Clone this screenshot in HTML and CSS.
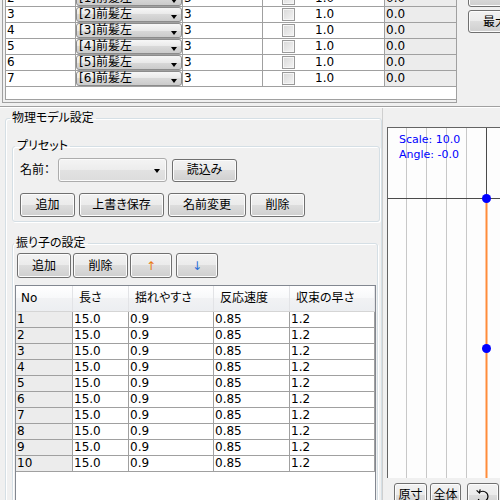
FILE: index.html
```html
<!DOCTYPE html>
<html lang="ja">
<head>
  <meta charset="UTF-8">
  <meta name="viewport" content="width=device-width, initial-scale=1.0">
  <title>物理モデル設定</title>
  <link rel="stylesheet" href="styles.css">
</head>
<body>
  <div class="top">
    <div class="grid">
      <div class="view">
        <div class="rows">
          <div class="row"><span class="c-no">2</span><span class="c-sel"><span class="combo">[1]前髪左<i class="arrow"></i></span></span><span class="c-val">3</span><span class="c-chk"><span class="box"></span></span><span class="c-w">1.0</span><span class="c-off">0.0</span></div>
          <div class="row"><span class="c-no">3</span><span class="c-sel"><span class="combo">[2]前髪左<i class="arrow"></i></span></span><span class="c-val">3</span><span class="c-chk"><span class="box"></span></span><span class="c-w">1.0</span><span class="c-off">0.0</span></div>
          <div class="row"><span class="c-no">4</span><span class="c-sel"><span class="combo">[3]前髪左<i class="arrow"></i></span></span><span class="c-val">3</span><span class="c-chk"><span class="box"></span></span><span class="c-w">1.0</span><span class="c-off">0.0</span></div>
          <div class="row"><span class="c-no">5</span><span class="c-sel"><span class="combo">[4]前髪左<i class="arrow"></i></span></span><span class="c-val">3</span><span class="c-chk"><span class="box"></span></span><span class="c-w">1.0</span><span class="c-off">0.0</span></div>
          <div class="row"><span class="c-no">6</span><span class="c-sel"><span class="combo">[5]前髪左<i class="arrow"></i></span></span><span class="c-val">3</span><span class="c-chk"><span class="box"></span></span><span class="c-w">1.0</span><span class="c-off">0.0</span></div>
          <div class="row"><span class="c-no">7</span><span class="c-sel"><span class="combo">[6]前髪左<i class="arrow"></i></span></span><span class="c-val">3</span><span class="c-chk"><span class="box"></span></span><span class="c-w">1.0</span><span class="c-off">0.0</span></div>
        </div>
      </div>
    </div>
    <div class="side">
      <button class="btn side-btn cut"></button>
      <button class="btn side-btn">最大化</button>
    </div>
  </div>
  <div class="hsplit"></div>

  <div class="bottom">
    <div class="left">
      <fieldset class="group outer">
        <legend>物理モデル設定</legend>

        <fieldset class="group preset">
          <legend>プリセット</legend>
          <div class="line">
            <label class="name-label">名前：</label>
            <span class="select"><i class="arrow"></i></span>
            <button class="btn load">読込み</button>
          </div>
          <div class="line btn-row">
            <button class="btn w55">追加</button>
            <button class="btn w85">上書き保存</button>
            <button class="btn w78">名前変更</button>
            <button class="btn w55">削除</button>
          </div>
        </fieldset>

        <fieldset class="group pendulum">
          <legend>振り子の設定</legend>
          <div class="line tools">
            <button class="btn w54">追加</button>
            <button class="btn w55">削除</button>
            <button class="btn w42 up">↑</button>
            <button class="btn w42 down">↓</button>
          </div>
          <div class="table">
            <div class="thead"><span>No</span><span>長さ</span><span>揺れやすさ</span><span>反応速度</span><span>収束の早さ</span></div>
            <div class="trow"><span>1</span><span>15.0</span><span>0.9</span><span>0.85</span><span>1.2</span></div>
            <div class="trow"><span>2</span><span>15.0</span><span>0.9</span><span>0.85</span><span>1.2</span></div>
            <div class="trow"><span>3</span><span>15.0</span><span>0.9</span><span>0.85</span><span>1.2</span></div>
            <div class="trow"><span>4</span><span>15.0</span><span>0.9</span><span>0.85</span><span>1.2</span></div>
            <div class="trow"><span>5</span><span>15.0</span><span>0.9</span><span>0.85</span><span>1.2</span></div>
            <div class="trow"><span>6</span><span>15.0</span><span>0.9</span><span>0.85</span><span>1.2</span></div>
            <div class="trow"><span>7</span><span>15.0</span><span>0.9</span><span>0.85</span><span>1.2</span></div>
            <div class="trow"><span>8</span><span>15.0</span><span>0.9</span><span>0.85</span><span>1.2</span></div>
            <div class="trow"><span>9</span><span>15.0</span><span>0.9</span><span>0.85</span><span>1.2</span></div>
            <div class="trow"><span>10</span><span>15.0</span><span>0.9</span><span>0.85</span><span>1.2</span></div>
          </div>
        </fieldset>
      </fieldset>
    </div>

    <div class="vsplit"></div>

    <div class="right">
      <div class="canvas">
        <svg width="112" height="350" viewBox="0 0 112 350">
          <g stroke="#c8c8c8" stroke-width="1">
            <line x1="18.5" y1="0" x2="18.5" y2="350"/>
            <line x1="38.5" y1="0" x2="38.5" y2="350"/>
            <line x1="58.5" y1="0" x2="58.5" y2="350"/>
            <line x1="78.5" y1="0" x2="78.5" y2="350"/>
          </g>
          <line x1="0" y1="70.5" x2="112" y2="70.5" stroke="#4a4a4a"/>
          <line x1="98.5" y1="0" x2="98.5" y2="70" stroke="#4a4a4a"/>
          <line x1="98.5" y1="70" x2="98.5" y2="350" stroke="#ff8c3a" stroke-width="2"/>
          <circle cx="98.5" cy="70.5" r="4.5" fill="#0000ff"/>
          <circle cx="98.5" cy="220.5" r="4.5" fill="#0000ff"/>
          <text class="info" x="11" y="15">Scale: 10.0</text>
          <text class="info" x="11" y="30">Angle: -0.0</text>
        </svg>
      </div>
      <div class="toolbar">
        <button class="btn tb w33">原寸</button>
        <button class="btn tb w31">全体</button>
        <button class="btn tb w32 reset">
          <svg width="18" height="16" viewBox="0 0 18 16">
            <path d="M5.2 4.6 A5.2 5.2 0 1 1 4.2 11" fill="none" stroke="#000" stroke-width="1.2"/>
            <path d="M2.6 2.4 L5.4 4.9 L6.2 1.4" fill="none" stroke="#000" stroke-width="1.2"/>
          </svg>
        </button>
      </div>
    </div>
  </div>
</body>
</html>
```

FILE: styles.css
```css
* {
  box-sizing: border-box;
}
body {
  margin: 0;
  width: 500px;
  height: 500px;
  overflow: hidden;
  background-color: #f0f0f0;
  font-family: "DejaVu Sans", "Noto Sans CJK JP", sans-serif;
  font-size: 12px;
  font-feature-settings: "palt";
  color: #000;
}

/* buttons */
.btn {
  font: inherit;
  font-feature-settings: "palt";
  height: 24px;
  padding: 0;
  border: 1px solid #707070;
  border-radius: 3px;
  background: linear-gradient(#f2f2f2, #ebebeb 50%, #dddddd 50%, #cfcfcf);
  box-shadow: inset 0 0 0 1px #fcfcfc;
  color: #000;
  line-height: 20px;
  white-space: nowrap;
}
.w31 { width: 31px; }
.w32 { width: 32px; }
.w33 { width: 33px; }
.w42 { width: 42px; }
.w54 { width: 54px; }
.w55 { width: 55px; }
.w78 { width: 78px; }
.w85 { width: 85px; }

/* top bone grid */
.top {
  display: flex;
  height: 103px;
}
.grid {
  margin-left: 2px;
  width: 455px;
  flex-shrink: 0;
  height: 103px;
  border: 1px solid #a0a0a0;
  border-top: none;
  padding: 0 0 2px 2px;
}
.view {
  height: 100%;
  border-left: 1px solid #a0a0a0;
  border-bottom: 1px solid #a0a0a0;
  background-color: #fff;
  overflow: hidden;
}
.rows {
  margin-top: -9px;
}
.row {
  display: grid;
  grid-template-columns: 70px 107px 80px 43px 79px 1fr;
  height: 16px;
  border-bottom: 1px solid #a0a0a0;
  line-height: 15px;
}
.row > span {
  height: 15px;
  white-space: nowrap;
  overflow: hidden;
}
.c-no, .c-val {
  padding-left: 1px;
  border-right: 1px solid #a0a0a0;
}
.c-sel {
  border-right: 1px solid #a0a0a0;
}
.c-chk {
  padding: 1px 0 0 19px;
}
.c-w {
  padding-left: 9px;
  border-right: 1px solid #a0a0a0;
}
.c-off {
  padding-left: 1px;
  background-color: #ececec;
}
.combo {
  display: flex;
  height: 15px;
  padding: 0 4px 0 2px;
  border: 1px solid #8c8c8c;
  border-radius: 3px;
  background: linear-gradient(#f7f7f7, #e9e9e9 50%, #d9d9d9 50%, #cbcbcb);
  line-height: 13px;
}
.arrow {
  margin-left: auto;
  align-self: flex-end;
  margin-bottom: 2px;
  width: 0;
  height: 0;
  border-left: 3.5px solid transparent;
  border-right: 3.5px solid transparent;
  border-top: 4px solid #000;
}
.box {
  display: block;
  width: 13px;
  height: 13px;
  border: 1px solid #9a9a9a;
  background: linear-gradient(135deg, #d8d8d8, #f4f4f4);
  box-shadow: inset 0 0 0 1px #f6f6f6;
}
.side {
  margin-left: 11px;
  display: flex;
  flex-direction: column;
  overflow: hidden;
}
.side-btn {
  width: 50px;
  flex-shrink: 0;
  height: 23px;
  text-align: left;
  padding-left: 14px;
}
.side-btn.cut {
  margin-top: -16px;
  margin-bottom: 3px;
}

.hsplit {
  height: 4px;
  border-bottom: 1px solid #a0a0a0;
}

/* bottom */
.bottom {
  display: flex;
  height: 393px;
  border-top: 1px solid #fff;
}
.left {
  width: 382px;
  flex-shrink: 0;
  overflow: hidden;
}
.group {
  margin: 0;
  min-width: 0;
  border: 1px solid #d5dfe5;
  border-radius: 3px;
  box-shadow: inset 1px 1px 0 #fff, 1px 1px 0 #fff;
}
.group legend {
  padding: 0 2px;
  line-height: 14px;
}
.outer {
  margin: 3px 0 0 5px;
  padding: 14px 1px 0 6px;
  height: 420px;
}
.outer > legend {
  margin-left: -2px;
}
.preset {
  padding: 5px 0 4px 7px;
}
.preset > legend {
  margin-left: -5px;
}
.pendulum {
  margin: 14px 2px 0 0;
  padding: 3px 0 0 4px;
  height: 300px;
}
.pendulum > legend {
  margin-left: -3px;
}
.line {
  display: flex;
  align-items: center;
  height: 24px;
}
.name-label {
  width: 38px;
  line-height: 14px;
}
.select {
  display: flex;
  width: 109px;
  height: 24px;
  padding: 0 6px 6px 0;
  border: 1px solid #acacac;
  border-radius: 3px;
  background: linear-gradient(#f4f4f4, #ececec 50%, #e2e2e2 50%, #dcdcdc);
  box-shadow: inset 0 0 0 1px #fafafa;
}
.load {
  width: 65px;
  height: 23px;
  margin-left: 5px;
}
.btn-row {
  margin-top: 11px;
  gap: 4px;
}
.tools {
  height: 25px;
  gap: 2px;
}
.tools .btn {
  height: 25px;
}
.tools .down {
  margin-left: 2px;
}
.up {
  color: #e87a10;
}
.down {
  color: #2a6fd8;
}

/* pendulum table */
.table {
  width: 361px;
  margin: 7px 0 0 -2px;
  height: 230px;
  border: 1px solid #828790;
  background-color: #fff;
}
.thead, .trow {
  display: grid;
  grid-template-columns: 57px 56px 85px 76px 85px 1fr;
}
.thead {
  height: 26px;
  border-bottom: 1px solid #d5d5d5;
  line-height: 25px;
  background: linear-gradient(#ffffff, #f7f8fa 50%, #f1f2f4 50%, #eceef1);
}
.thead span {
  padding-left: 6px;
  border-right: 1px solid #e2e3e6;
}
.thead span:nth-child(1) {
  padding-left: 5px;
}
.trow {
  height: 16px;
  border-bottom: 1px solid #a0a0a0;
  line-height: 15px;
}
.trow span {
  padding-left: 1px;
  border-right: 1px solid #a0a0a0;
}
.trow span:first-child {
  background-color: #ececec;
}

/* preview */
.vsplit {
  width: 5px;
  flex-shrink: 0;
  border-left: 1px solid #cfcfcf;
}
.right {
  flex: 1;
  padding-top: 19px;
  overflow: hidden;
}
.canvas {
  height: 351px;
  border-top: 1px solid #646464;
  border-left: 1px solid #646464;
  background-color: #fdfdfd;
}
.canvas svg {
  display: block;
}
.info {
  font-family: "DejaVu Sans", sans-serif;
  font-size: 11px;
  fill: #0000ff;
}
.toolbar {
  display: flex;
  gap: 3px;
  padding: 5px 0 0 7px;
}
.tb {
  height: 24px;
  line-height: 22px;
}
.reset {
  margin-left: 3px;
  padding-top: 2px;
}
.reset svg {
  display: block;
  margin: 0 auto;
}
```
